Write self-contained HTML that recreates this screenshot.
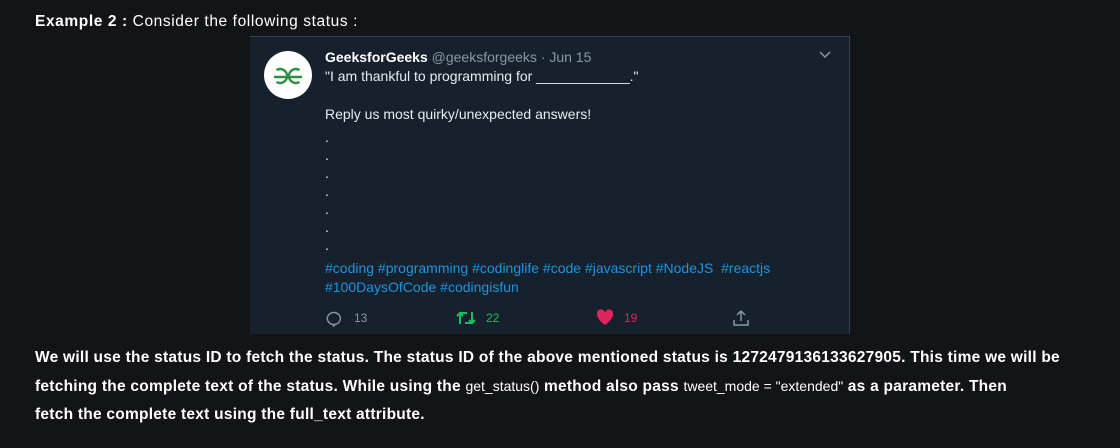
<!DOCTYPE html>
<html><head><meta charset="utf-8"><style>
*{margin:0;padding:0;box-sizing:border-box}
body{width:1120px;height:448px;background:#131417;color:#fff;font-family:"Liberation Sans",sans-serif;overflow:hidden;position:relative}
.h{position:absolute;left:35px;top:13px;font-size:15.5px;font-weight:bold;letter-spacing:0.6px}
.h span{font-weight:normal}
.box{position:absolute;left:250px;top:36px;width:600px;height:298px;background:#17212d;border-top:1px solid #38444d;border-right:1px solid #38444d}
.av{position:absolute;left:14px;top:14px;width:48px;height:48px;border-radius:50%;background:#fff}
.t{position:absolute;left:75px;font-size:14px;color:#e6ecf0;line-height:19px;width:510px}
.t b{color:#fff}
.g{color:#8899a6}
.hash{color:#1b95e0}
.chev{position:absolute;right:18px;top:14px}
.act{position:absolute;top:272px;font-size:12px;display:flex;align-items:center;gap:10px}
.p{position:absolute;left:35px;top:344px;font-size:15.5px;font-weight:bold;line-height:28px;letter-spacing:0.25px;white-space:nowrap}
.p .c{font-weight:normal;font-size:14px;letter-spacing:0}
</style></head><body>
<div class="h">Example 2 : <span>Consider the following status :</span></div>
<div class="box">
 <div class="av"><svg width="48" height="48" viewBox="0 0 48 48"><g stroke="#2f8d46" stroke-width="2.4" fill="none"><path d="M12.5 19A7 7 0 1 1 12.5 31M10 26h15"/><path d="M35.5 19A7 7 0 1 0 35.5 31M38 26H23"/></g></svg></div>
 <svg class="chev" width="12" height="8" viewBox="0 0 12 8"><path d="M1 1l5 5 5-5" stroke="#8899a6" stroke-width="1.5" fill="none"/></svg>
 <div class="t" style="top:11px"><b>GeeksforGeeks</b> <span class="g">@geeksforgeeks · Jun 15</span><br>"I am thankful to programming for ____________."<br><br>Reply us most quirky/unexpected answers!</div>
 <div class="t" style="top:91px;line-height:18px">.<br>.<br>.<br>.<br>.<br>.<br>.</div>
 <div class="t" style="top:222px"><span class="hash">#coding #programming #codinglife #code #javascript #NodeJS &nbsp;#reactjs<br>#100DaysOfCode #codingisfun</span></div>
 <div class="act" style="left:76px;color:#8899a6"><svg width="18" height="18" viewBox="0 0 18 18"><path d="M8 15.5A6.5 6 0 1 1 9.5 15.3L7.5 17z" stroke="#8899a6" stroke-width="1.4" fill="none"/></svg>13</div>
 <div class="act" style="left:206px;color:#17bf63"><svg width="20" height="18" viewBox="0 0 20 18"><path d="M4 15V4M1 7l3-3 3 3M4 4h7M16 3v11M13 11l3 3 3-3M16 14H9" stroke="#17bf63" stroke-width="2" fill="none"/></svg>22</div>
 <div class="act" style="left:346px;color:#e0245e"><svg width="18" height="17" viewBox="0 0 18 17"><path d="M9 16S1 10.5 1 5.5A4 4 0 0 1 9 3.5a4 4 0 0 1 8 2C17 10.5 9 16 9 16z" fill="#e0245e"/></svg>19</div>
 <div class="act" style="left:482px"><svg width="18" height="18" viewBox="0 0 18 18"><path d="M9 2v10M5 6l4-4 4 4M2 11v5h14v-5" stroke="#8899a6" stroke-width="1.5" fill="none"/></svg></div>
</div>
<div class="p">We will use the status ID to fetch the status. The status ID of the above mentioned status is 1272479136133627905. This time we will be<br>fetching the complete text of the status. While using the <span class="c">get_status()</span> method also pass <span class="c">tweet_mode = "extended"</span> as a parameter. Then<br>fetch the complete text using the full_text attribute.</div>
</body></html>
